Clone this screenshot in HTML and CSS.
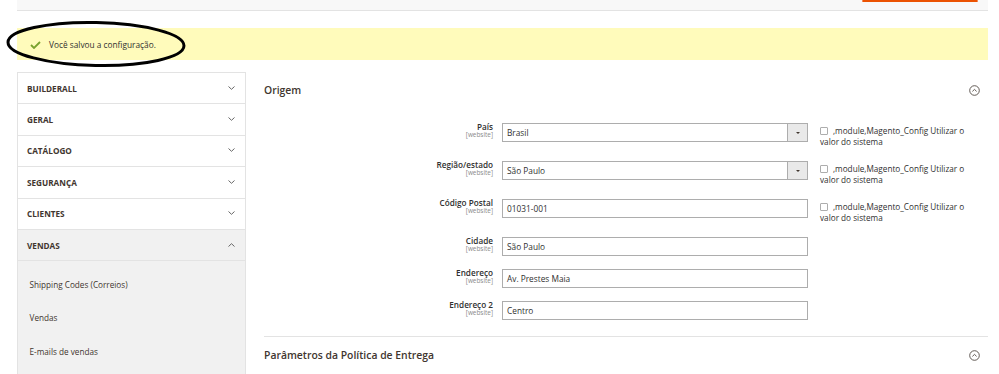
FILE: index.html
```html
<!DOCTYPE html>
<html lang="pt-BR">
<head>
<meta charset="utf-8">
<title>Configuração</title>
<link rel="stylesheet" href="styles.css">
</head>
<body>
<div class="page">
  <header class="page-actions">
    <span class="btn-primary"></span>
  </header>

  <div class="message-success">
    <svg class="check" width="11" height="8" viewBox="0 0 11 8"><polyline points="1,4 4,7 10,1" fill="none" stroke="#79a22e" stroke-width="1.8"/></svg>
    <span>Você salvou a configuração.</span>
  </div>

  <svg class="annotation" width="186" height="52" viewBox="0 0 186 52">
    <ellipse cx="90" cy="24" rx="88" ry="21.5" fill="none" stroke="#000" stroke-width="3" transform="rotate(1.2 90 24)"/>
  </svg>

  <div class="layout">
    <nav class="tabs">
      <div class="tab"><span>BUILDERALL</span><svg class="chev" width="7" height="4" viewBox="0 0 7 4"><polyline points="0.5,0.5 3.5,3.3 6.5,0.5" fill="none" stroke="#666" stroke-width="1"/></svg></div>
      <div class="tab"><span>GERAL</span><svg class="chev" width="7" height="4" viewBox="0 0 7 4"><polyline points="0.5,0.5 3.5,3.3 6.5,0.5" fill="none" stroke="#666" stroke-width="1"/></svg></div>
      <div class="tab"><span>CATÁLOGO</span><svg class="chev" width="7" height="4" viewBox="0 0 7 4"><polyline points="0.5,0.5 3.5,3.3 6.5,0.5" fill="none" stroke="#666" stroke-width="1"/></svg></div>
      <div class="tab"><span>SEGURANÇA</span><svg class="chev" width="7" height="4" viewBox="0 0 7 4"><polyline points="0.5,0.5 3.5,3.3 6.5,0.5" fill="none" stroke="#666" stroke-width="1"/></svg></div>
      <div class="tab"><span>CLIENTES</span><svg class="chev" width="7" height="4" viewBox="0 0 7 4"><polyline points="0.5,0.5 3.5,3.3 6.5,0.5" fill="none" stroke="#666" stroke-width="1"/></svg></div>
      <div class="tab open"><span>VENDAS</span><svg class="chev" width="7" height="4" viewBox="0 0 7 4"><polyline points="0.5,3.5 3.5,0.7 6.5,3.5" fill="none" stroke="#666" stroke-width="1"/></svg></div>
      <ul class="subtabs">
        <li>Shipping Codes (Correios)</li>
        <li>Vendas</li>
        <li>E-mails de vendas</li>
      </ul>
    </nav>

    <main class="content">
      <section class="group">
        <div class="group-head">
          <h3>Origem</h3>
          <svg class="toggle" width="11" height="11" viewBox="0 0 11 11"><circle cx="5.5" cy="5.5" r="4.8" fill="none" stroke="#514943" stroke-width="0.9"/><polyline points="3.4,6.4 5.5,4.4 7.6,6.4" fill="none" stroke="#514943" stroke-width="0.9"/></svg>
        </div>
        <div class="fields">
          <div class="row tall">
            <label class="lbl"><span class="name">País</span><span class="scope">[website]</span></label>
            <div class="select"><span class="val">Brasil</span><span class="btn"><i class="arrow"></i></span></div>
            <div class="default"><span class="cb"></span>,module,Magento_Config Utilizar o valor do sistema</div>
          </div>
          <div class="row tall">
            <label class="lbl"><span class="name">Região/estado</span><span class="scope">[website]</span></label>
            <div class="select"><span class="val">São Paulo</span><span class="btn"><i class="arrow"></i></span></div>
            <div class="default"><span class="cb"></span>,module,Magento_Config Utilizar o valor do sistema</div>
          </div>
          <div class="row tall">
            <label class="lbl"><span class="name">Código Postal</span><span class="scope">[website]</span></label>
            <div class="input">01031-001</div>
            <div class="default"><span class="cb"></span>,module,Magento_Config Utilizar o valor do sistema</div>
          </div>
          <div class="row">
            <label class="lbl"><span class="name">Cidade</span><span class="scope">[website]</span></label>
            <div class="input">São Paulo</div>
          </div>
          <div class="row">
            <label class="lbl"><span class="name">Endereço</span><span class="scope">[website]</span></label>
            <div class="input">Av. Prestes Maia</div>
          </div>
          <div class="row">
            <label class="lbl"><span class="name">Endereço 2</span><span class="scope">[website]</span></label>
            <div class="input">Centro</div>
          </div>
        </div>
      </section>
      <section class="group bordered">
        <div class="group-head">
          <h3>Parâmetros da Política de Entrega</h3>
          <svg class="toggle" width="11" height="11" viewBox="0 0 11 11"><circle cx="5.5" cy="5.5" r="4.8" fill="none" stroke="#514943" stroke-width="0.9"/><polyline points="3.4,6.4 5.5,4.4 7.6,6.4" fill="none" stroke="#514943" stroke-width="0.9"/></svg>
        </div>
      </section>
    </main>
  </div>
</div>
</body>
</html>
```

FILE: styles.css
```css
* { box-sizing: border-box; }
html, body { margin: 0; padding: 0; background: #fff; }
body {
  font-family: "Open Sans", "Noto Sans", "Liberation Sans", sans-serif;
  color: #303030;
  overflow: hidden;
  height: 374px;
}
.page {
  position: relative;
  width: 971px;
  margin-left: 17px;
}
.page-actions {
  height: 11px;
  background: #f8f8f8;
  border-bottom: 1px solid #e3e3e3;
  display: flex;
  justify-content: flex-end;
  align-items: flex-start;
  padding-right: 10px;
}
.btn-primary {
  display: block;
  width: 116px;
  height: 2px;
  background: #eb5202;
  border-left: 1px solid #f48a5a;
  border-right: 1px solid #f48a5a;
}
.message-success {
  margin-top: 17px;
  height: 32px;
  background: #fffbbb;
  display: flex;
  align-items: center;
  padding-left: 13px;
  font-size: 8.3px;
  color: #303030;
}
.message-success .check { margin-right: 8px; margin-top: 1px; }
.annotation {
  position: absolute;
  left: -11px;
  top: 20px;
  overflow: visible;
}
.layout {
  display: flex;
  margin-top: 12px;
}
.tabs {
  width: 229px;
  flex: none;
  border-left: 1px solid #e3e3e3;
  border-right: 1px solid #e3e3e3;
  border-top: 1px solid #e3e3e3;
  background: #f1f1f1;
  height: 302px;
}
.tab {
  height: 31.4px;
  border-bottom: 1px solid #e3e3e3;
  background: #fff;
  display: flex;
  align-items: center;
  justify-content: space-between;
  padding: 0 10px 0 9px;
  font-size: 8.2px;
  font-weight: 700;
  color: #41362f;
}
.tab .chev { margin-top: -1px; }
.tab.open { background: #f1f1f1; }
.subtabs {
  list-style: none;
  margin: 0;
  padding: 6px 0 0 11.5px;
}
.subtabs li {
  height: 33.6px;
  display: flex;
  align-items: center;
  font-size: 8.2px;
  color: #41362f;
}
.content {
  flex: 1;
  margin-left: 18px;
}
.group-head {
  height: 35px;
  display: flex;
  align-items: center;
  justify-content: space-between;
  padding-right: 8px;
}
.group-head h3 {
  margin: 0;
  font-size: 10.4px;
  font-weight: 600;
  color: #41362f;
}
.group-head .toggle { margin-top: 1px; }
.bordered { border-top: 1px solid #e3e3e3; margin-top: 16px; }
.bordered .group-head { height: 36px; }
.fields {
  padding-top: 16px;
  display: flex;
  flex-direction: column;
  gap: 13px;
}
.row {
  display: flex;
  align-items: flex-start;
  min-height: 19px;
}
.row.tall { min-height: 25px; }
.lbl {
  width: 238px;
  flex: none;
  padding-right: 9px;
  display: flex;
  flex-direction: column;
  align-items: flex-end;
  margin-top: -1.5px;
}
.lbl .name {
  font-size: 8.2px;
  font-weight: 600;
  line-height: 9.5px;
  color: #303030;
}
.lbl .scope {
  font-size: 6.4px;
  line-height: 7.5px;
  color: #8a8a8a;
}
.select, .input {
  width: 306px;
  flex: none;
  height: 19px;
  border: 1px solid #adadad;
  background: #fff;
  font-size: 8.3px;
  color: #303030;
  display: flex;
  align-items: center;
}
.input { padding-left: 4px; }
.select .val { flex: 1; padding-left: 4px; }
.select .btn {
  width: 20px;
  height: 100%;
  border-left: 1px solid #adadad;
  background: #e9e9e9;
  display: flex;
  align-items: center;
  justify-content: center;
}
.select .arrow {
  width: 0;
  height: 0;
  border-left: 2px solid transparent;
  border-right: 2px solid transparent;
  border-top: 2.5px solid #41362f;
}
.default {
  width: 156px;
  margin-left: 12px;
  margin-top: 2px;
  font-size: 8.2px;
  line-height: 11px;
  color: #303030;
}
.cb {
  display: inline-block;
  width: 8px;
  height: 8px;
  border: 1px solid #adadad;
  border-radius: 1px;
  background: #fff;
  vertical-align: -1px;
  margin-right: 5px;
}
```
